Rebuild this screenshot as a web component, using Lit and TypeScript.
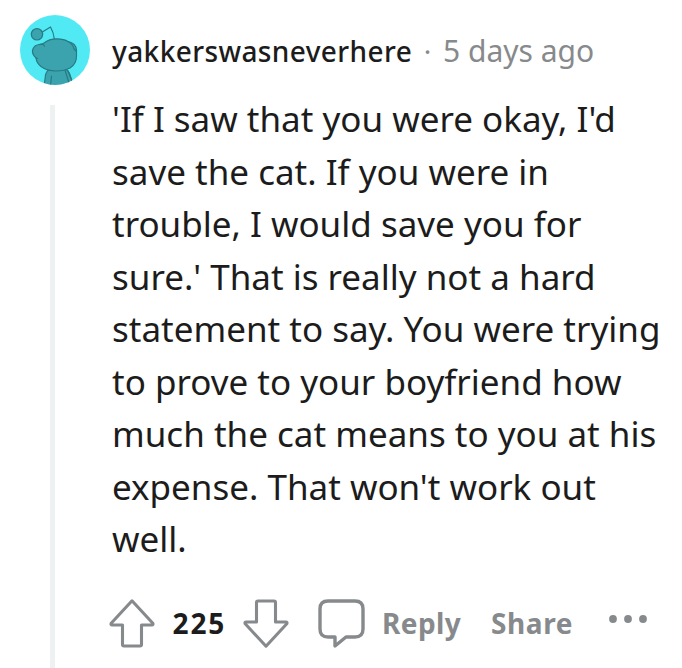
import { LitElement, html, css, svg } from "lit";
import { customElement } from "lit/decorators.js";

const lines = [
  "'If I saw that you were okay, I'd",
  "save the cat. If you were in",
  "trouble, I would save you for",
  "sure.' That is really not a hard",
  "statement to say. You were trying",
  "to prove to your boyfriend how",
  "much the cat means to you at his",
  "expense. That won't work out",
  "well.",
];

const arrow = svg`<path d="M22 1.8 L42.8 24.2 Q43.6 26 41.8 26 H31.5 V45.5 Q31.5 47 30 47 H14 Q12.5 47 12.5 45.5 V26 H2.2 Q0.4 26 1.2 24.2 Z"/>`;

@customElement("app-root")
export class AppRoot extends LitElement {
  static styles = css`
    :host {
      display: block;
      width: 682px;
      height: 668px;
      overflow: hidden;
      background: #fff;
      color: #1c1c1c;
      font-family: "Noto Sans", sans-serif;
    }
    .comment {
      display: grid;
      grid-template-columns: 70px 1fr;
      column-gap: 22px;
      padding: 15px 0 0 20px;
      height: 653px;
    }
    .rail {
      display: flex;
      flex-direction: column;
      align-items: center;
      gap: 20px;
      height: 653px;
    }
    .avatar { width: 70px; height: 70px; flex: none; display: block; }
    .thread { width: 5px; flex: 1; margin-right: 5px; background: #edf1f1; }
    .main { min-width: 0; }
    .head {
      display: flex;
      align-items: baseline;
      height: 78px;
      line-height: 72px;
      white-space: nowrap;
    }
    .name { width: 300px; font-size: 28px; font-weight: 500; letter-spacing: 0.4px; }
    .dot { width: 31px; text-align: center; color: #878a8c; font-size: 28px; }
    .time { font-size: 30px; color: #878a8c; }
    .body {
      margin: 0;
      font-size: 35px;
      line-height: 52.5px;
      white-space: nowrap;
    }
    .line { display: block; }
    .actions {
      display: flex;
      align-items: center;
      height: 52px;
      margin: 31.5px 0 0 -2px;
      font-size: 28px;
      font-weight: 700;
      color: #878a8c;
      white-space: nowrap;
    }
    .icon { flex: none; display: block; fill: none; stroke: #878a8c; stroke-width: 3.1; stroke-linejoin: round; overflow: visible; }
    .count { width: 54px; margin: 0 17.5px 0 16.5px; color: #1c1c1c; letter-spacing: 1.9px; }
    .bubble { margin: 0 17px 0 28px; stroke-width: 3.4; }
    .reply { width: 79px; margin: 0 30px 0 0; letter-spacing: 0.4px; }
    .share { width: 82px; margin: 0 36px 0 0; letter-spacing: 0.6px; }
    .dots { fill: #878a8c; flex: none; margin-top: -8px; }
  `;

  render() {
    return html`
      <article class="comment">
        <div class="rail">
          <svg class="avatar" viewBox="0 0 70 70">
            <defs><clipPath id="disc"><circle cx="35" cy="35" r="35" /></clipPath></defs>
            <circle cx="35" cy="35" r="35" fill="#51e9f4" />
            <g clip-path="url(#disc)" fill="#3ba3ad" stroke="#277b83" stroke-width="1.2" stroke-linejoin="round" stroke-linecap="round">
              <path d="M24 72 L25.500 60 Q27 54 32 54 H44 Q49 55 50 60 L54 72 Z" />
              <path d="M31.500 61 L30.500 71 M45 55 L49 68 M47.500 55 L52 66" fill="none" />
              <path d="M34.500 24.500 Q33.500 17 30.500 12 L21.500 17.500" fill="none" />
              <circle cx="17" cy="19.300" r="5.700" />
              <path d="M24 28 Q29 23.800 37 23.800 Q44 23.800 48 26.500 Q56 28 56.500 35 V41 Q56.500 49 50 53 Q44 56 36 56 Q27 56 21 51.500 Q16.500 48 16 43 Q12 39 12.500 35.500 Q14 29.500 20 29.500 Q22 29.500 24 28 Z" />
              <path d="M19 29.500 Q23 28.500 24.500 31 M16 43 L17.500 43.500 M48 26.500 Q53 29 54 34 L56 36" fill="none" />
            </g>
          </svg>
          <div class="thread"></div>
        </div>
        <div class="main">
          <header class="head">
            <span class="name">yakkerswasneverhere</span>
            <span class="dot">·</span>
            <span class="time">5 days ago</span>
          </header>
          <p class="body">${lines.map((l) => html`<span class="line">${l}</span>`)}</p>
          <footer class="actions">
            <svg class="icon" width="46" height="49" viewBox="0 0 46 49">${arrow}</svg>
            <span class="count">225</span>
            <svg class="icon" width="46" height="49" viewBox="0 0 46 49"><g transform="matrix(1 0 0 -1 0 49)">${arrow}</g></svg>
            <svg class="icon bubble" width="47" height="49" viewBox="0 0 47 49">
              <path d="M10 2 H37 Q45 2 45 10 V30 Q45 38 37 38 H28 L17 47 V38 H10 Q2 38 2 30 V10 Q2 2 10 2 Z" />
            </svg>
            <span class="reply">Reply</span>
            <span class="share">Share</span>
            <svg class="dots" width="38" height="8" viewBox="0 0 38 8">
              <circle cx="4" cy="4" r="3.900" /><circle cx="19" cy="4" r="3.900" /><circle cx="34" cy="4" r="3.900" />
            </svg>
          </footer>
        </div>
      </article>
    `;
  }
}
